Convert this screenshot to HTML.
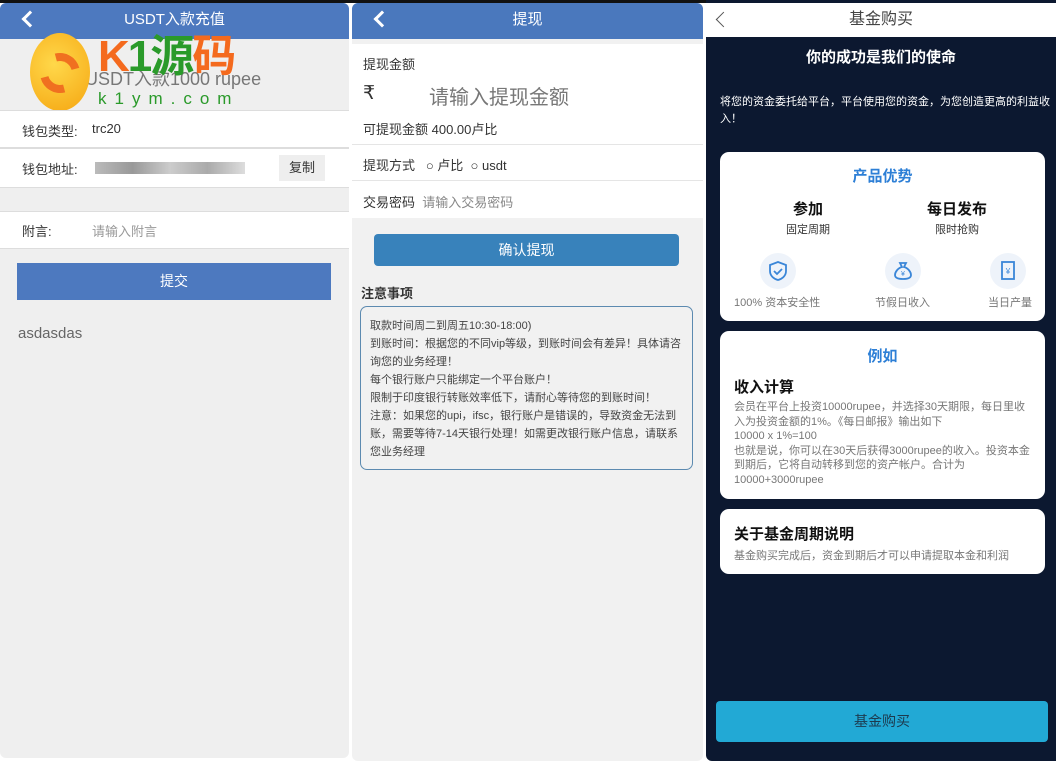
<!DOCTYPE html>
<html><head><meta charset="utf-8"><style>
*{box-sizing:border-box;margin:0;padding:0}
body{width:1056px;height:761px;background:#fff;position:relative;overflow:hidden;font-family:"Liberation Sans","Noto Sans CJK SC",sans-serif;font-size:13px;color:#333}
.abs{position:absolute}
.p1{left:0;top:3px;width:349px;height:755px;background:#efefef;border-radius:6px;overflow:hidden}
.p2{left:352px;top:3px;width:351px;height:758px;background:#f1f1f1;border-radius:6px;overflow:hidden}
.p3{left:706px;top:0;width:350px;height:761px;background:#0c1830;border-radius:0 0 0 6px;overflow:hidden}
.hdr{position:absolute;left:0;top:0;right:0;height:36px;background:#4d79bf;color:#fff;text-align:center;line-height:34px;font-size:15px}
.back{position:absolute;left:20px;top:8px;width:12px;height:12px;border-left:3px solid #fff;border-bottom:3px solid #fff;transform:rotate(45deg);margin-left:4px;margin-top:2px}
.row{position:absolute;left:0;right:0;background:#fff;border-top:1px solid #ddd;border-bottom:1px solid #ddd}
.card{position:absolute;left:14px;width:325px;background:#fff;border-radius:9px}
</style></head><body>
<div class="abs" style="left:0;top:0;width:1056px;height:3px;background:#111"></div>
<!-- panel 1 -->
<div class="abs p1">
 <div class="hdr">USDT入款充值<div class="back"></div></div>
 <div class="abs" style="left:85px;top:62px;font-size:18px;color:#777">USDT入款1000 rupee</div>
 <div class="abs" style="left:30px;top:30px;width:60px;height:78px;border-radius:50%;background:radial-gradient(circle at 40% 40%,#ffd84a,#f5a510)"></div>
 <div class="abs" style="left:40px;top:50px;width:40px;height:40px;border:8px solid #f07020;border-radius:50%;border-color:#f07020 transparent #f07020 transparent;transform:rotate(30deg)"></div>
 <div class="abs" style="left:98px;top:30px;font-size:44px;font-weight:bold;color:#f46a1e;line-height:48px;letter-spacing:-2px">K<span style="color:#2a9a2a">1</span><span style="color:#2a9a2a">源</span>码</div>
 <div class="abs" style="left:98px;top:86px;font-size:17px;color:#2a9a2a;letter-spacing:8px">k1ym.com</div>
 <div class="row" style="top:107px;height:38px"><span class="abs" style="left:22px;top:10px">钱包类型:</span><span class="abs" style="left:92px;top:10px">trc20</span></div>
 <div class="row" style="top:145px;height:40px"><span class="abs" style="left:22px;top:10px">钱包地址:</span>
  <div class="abs" style="left:95px;top:13px;width:150px;height:12px;background:linear-gradient(90deg,#bbb,#999,#ccc,#aaa,#ddd)"></div>
  <div class="abs" style="left:279px;top:6px;width:46px;height:26px;background:#eee;text-align:center;line-height:26px">复制</div></div>
 <div class="row" style="top:208px;height:38px"><span class="abs" style="left:22px;top:9px">附言:</span><span class="abs" style="left:92px;top:9px;color:#999">请输入附言</span></div>
 <div class="abs" style="left:17px;top:260px;width:314px;height:37px;background:#4d79bf;color:#fff;text-align:center;line-height:37px;font-size:14px">提交</div>
 <div class="abs" style="left:18px;top:322px;font-size:15px;color:#666">asdasdas</div>
</div>
<!-- panel 2 -->
<div class="abs p2">
 <div class="hdr" style="background:#4a78bd">提现<div class="back"></div></div>
 <div class="abs" style="left:0;right:0;top:41px;height:174px;background:#fff"></div>
 <div class="abs" style="left:11px;top:51px">提现金额</div>
 <div class="abs" style="left:11px;top:79px;font-size:19px">₹</div>
 <div class="abs" style="left:77px;top:78px;font-size:20px;color:#777">请输入提现金额</div>
 <div class="abs" style="left:11px;top:116px">可提现金额 400.00卢比</div>
 <div class="abs" style="left:0;right:0;top:141px;border-top:1px solid #e5e5e5"></div>
 <div class="abs" style="left:11px;top:152px">提现方式 &nbsp; ○ 卢比 &nbsp;○ usdt</div>
 <div class="abs" style="left:0;right:0;top:177px;border-top:1px solid #e5e5e5"></div>
 <div class="abs" style="left:11px;top:189px">交易密码 &nbsp;<span style="color:#888">请输入交易密码</span></div>
 <div class="abs" style="left:22px;top:231px;width:305px;height:32px;background:#3882bb;border-radius:4px;color:#fff;text-align:center;line-height:32px;font-size:14px">确认提现</div>
 <div class="abs" style="left:9px;top:280px;font-weight:bold">注意事项</div>
 <div class="abs" style="left:8px;top:303px;width:333px;height:164px;border:1px solid #5c8ab0;border-radius:7px;padding:10px 9px;font-size:11px;line-height:18px;color:#444">取款时间周二到周五10:30-18:00)<br>到账时间：根据您的不同vip等级，到账时间会有差异！具体请咨询您的业务经理！<br>每个银行账户只能绑定一个平台账户！<br>限制于印度银行转账效率低下，请耐心等待您的到账时间！<br>注意：如果您的upi，ifsc，银行账户是错误的，导致资金无法到账，需要等待7-14天银行处理！如需更改银行账户信息，请联系您业务经理</div>
</div>
<!-- panel 3 -->
<div class="abs p3">
 <div class="abs" style="left:0;right:0;top:3px;height:34px;background:#fff;text-align:center;line-height:34px;font-size:16px;color:#444">基金购买
  <div class="abs" style="left:12px;top:11px;width:11px;height:11px;border-left:1.5px solid #555;border-bottom:1.5px solid #555;transform:rotate(45deg)"></div></div>
 <div class="abs" style="left:0;right:0;top:46px;text-align:center;color:#fff;font-weight:bold;font-size:15px">你的成功是我们的使命</div>
 <div class="abs" style="left:14px;top:94px;width:330px;color:#fff;font-size:11px;line-height:17px">将您的资金委托给平台，平台使用您的资金，为您创造更高的利益收入！</div>
 <div class="card" style="top:152px;height:169px">
  <div class="abs" style="left:0;right:0;top:13px;text-align:center;color:#2d7fd6;font-weight:bold;font-size:15px">产品优势</div>
  <div class="abs" style="left:48px;top:46px;width:80px;text-align:center;font-weight:bold;font-size:15px;color:#111">参加</div>
  <div class="abs" style="left:48px;top:69px;width:80px;text-align:center;font-size:11px">固定周期</div>
  <div class="abs" style="left:192px;top:46px;width:90px;text-align:center;font-weight:bold;font-size:15px;color:#111">每日发布</div>
  <div class="abs" style="left:192px;top:69px;width:90px;text-align:center;font-size:11px">限时抢购</div>
  <div class="abs" style="left:40px;top:101px;width:36px;height:36px;border-radius:50%;background:#eef3fa"><svg width="36" height="36"><path d="M18 9l8 3v6c0 5-4 8-8 9-4-1-8-4-8-9v-6z M14 18l3 3 5-5" fill="none" stroke="#3a86d8" stroke-width="1.8"/></svg></div>
  <div class="abs" style="left:165px;top:101px;width:36px;height:36px;border-radius:50%;background:#eef3fa"><svg width="36" height="36"><path d="M15 10h6l-2 4c4 1 7 5 7 8 0 3-3 4-8 4s-8-1-8-4c0-3 3-7 7-8z" fill="none" stroke="#3a86d8" stroke-width="1.8"/><text x="18" y="23" font-size="7" text-anchor="middle" fill="#3a86d8">¥</text></svg></div>
  <div class="abs" style="left:270px;top:101px;width:36px;height:36px;border-radius:50%;background:#eef3fa"><svg width="36" height="36"><rect x="12" y="9" width="12" height="17" fill="none" stroke="#3a86d8" stroke-width="1.8"/><text x="18" y="21" font-size="8" text-anchor="middle" fill="#3a86d8">¥</text></svg></div>
  <div class="abs" style="left:14px;top:142px;font-size:11px;color:#777">100% 资本安全性</div>
  <div class="abs" style="left:155px;top:142px;font-size:11px;color:#777">节假日收入</div>
  <div class="abs" style="left:268px;top:142px;font-size:11px;color:#777">当日产量</div>
 </div>
 <div class="card" style="top:331px;height:168px">
  <div class="abs" style="left:0;right:0;top:14px;text-align:center;color:#2d7fd6;font-weight:bold;font-size:15px">例如</div>
  <div class="abs" style="left:14px;top:45px;font-weight:bold;font-size:15px;color:#111">收入计算</div>
  <div class="abs" style="left:14px;top:69px;width:300px;font-size:11px;line-height:14.5px;color:#777">会员在平台上投资10000rupee，并选择30天期限，每日里收入为投资金额的1%。《每日邮报》输出如下<br>10000 x 1%=100<br>也就是说，你可以在30天后获得3000rupee的收入。投资本金到期后，它将自动转移到您的资产帐户。合计为<br>10000+3000rupee</div>
 </div>
 <div class="card" style="top:509px;height:65px">
  <div class="abs" style="left:14px;top:14px;font-weight:bold;font-size:15px;color:#111">关于基金周期说明</div>
  <div class="abs" style="left:14px;top:38px;font-size:11px;color:#777">基金购买完成后，资金到期后才可以申请提取本金和利润</div>
 </div>
 <div class="abs" style="left:10px;top:701px;width:332px;height:41px;background:#22a9d5;border-radius:4px;text-align:center;line-height:41px;font-size:14px;color:#1c3a4e">基金购买</div>
</div>
</body></html>
